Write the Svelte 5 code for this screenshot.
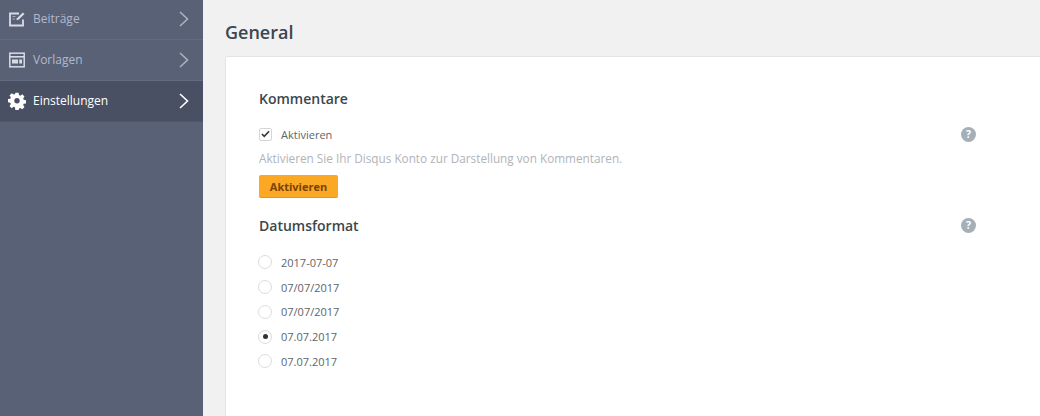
<script lang="ts">
  const nav = [
    { label: 'Beiträge', icon: 'edit', active: false },
    { label: 'Vorlagen', icon: 'layout', active: false },
    { label: 'Einstellungen', icon: 'gear', active: true }
  ]
  const dates = [
    { label: '2017-07-07', checked: false },
    { label: '07/07/2017', checked: false },
    { label: '07/07/2017', checked: false },
    { label: '07.07.2017', checked: true },
    { label: '07.07.2017', checked: false }
  ]
</script>

{#snippet help()}
  <span class="help">?</span>
{/snippet}

<div class="page">
  <aside class="sidebar">
    {#each nav as item}
      <div class="nav-item" class:active={item.active}>
        <svg class="nav-icon" viewBox="0 0 18 18" width="18" height="18" fill="none" stroke="currentColor">
          {#if item.icon === 'edit'}
            <path d="M15 9.5v6H2V3.5h9" stroke-width="1.8" />
            <path d="M8.5 10.2l.4-2 6-5.7 1.6 1.6-6 5.7z" fill="currentColor" stroke="none" />
            <path d="M4.5 6.5h3M4.5 9h2.5" stroke-width="1" opacity="0.6" />
          {:else if item.icon === 'layout'}
            <rect x="1.8" y="2.2" width="14.4" height="13.6" stroke-width="1.5" />
            <path d="M2 5.8h14" stroke-width="1.6" />
            <path d="M4 8.6h6v4H4zM11.2 8.6H14v4h-2.8z" fill="currentColor" stroke="none" />
          {:else}
            <path fill="currentColor" stroke="none" fill-rule="evenodd" d="M7.4.8h3.2l.4 2.3 1.3.55 1.95-1.35 2.25 2.25-1.35 1.95.55 1.3 2.3.4v3.2l-2.3.4-.55 1.3 1.35 1.95-2.25 2.25-1.95-1.35-1.3.55-.4 2.3H7.4L7 15.35l-1.3-.55-1.95 1.35-2.25-2.25L2.85 11.95 2.3 10.65 0 10.25v-3.2l2.3-.4.55-1.3L1.5 3.4l2.25-2.25L5.7 2.5 7 1.95zM9 6.1a2.7 2.7 0 1 0 0 5.4 2.7 2.7 0 0 0 0-5.4z" />
          {/if}
        </svg>
        <span class="nav-label">{item.label}</span>
        <svg class="chevron" viewBox="0 0 10 16" width="10" height="16" fill="none" stroke="currentColor" stroke-width="1.6">
          <path d="M1 1l7.5 7L1 15" />
        </svg>
      </div>
    {/each}
  </aside>

  <main class="content">
    <h1>General</h1>
    <section class="card">
      <div class="title-row">
        <h2>Kommentare</h2>
      </div>
      <div class="check-row">
        <span class="checkbox">
          <svg viewBox="0 0 10 8" width="9" height="8" fill="none" stroke="#2f3438" stroke-width="1.7">
            <path d="M1 4l2.6 2.6L9 1" />
          </svg>
        </span>
        <span class="check-label">Aktivieren</span>
        {@render help()}
      </div>
      <p class="hint">Aktivieren Sie Ihr Disqus Konto zur Darstellung von Kommentaren.</p>
      <button class="action">Aktivieren</button>

      <div class="title-row date-title">
        <h2>Datumsformat</h2>
        {@render help()}
      </div>
      <ul class="radios">
        {#each dates as date}
          <li>
            <span class="radio" class:checked={date.checked}></span>
            {date.label}
          </li>
        {/each}
      </ul>
    </section>
  </main>
</div>

<style>
  :global(body) {
    margin: 0;
    font-family: "Open Sans", "Noto Sans", sans-serif;
  }

  .page {
    display: flex;
    height: 416px;
    overflow: hidden;
    background: #f1f1f1;
  }

  .sidebar {
    width: 203px;
    flex-shrink: 0;
    background: #596176;
    box-sizing: border-box;
    margin-top: -1px;
  }

  .nav-item {
    display: flex;
    align-items: center;
    box-sizing: border-box;
    height: 41px;
    padding: 0 14px 1px 8px;
    border-bottom: 1px solid #636b80;
    color: #b0b9d0;
    font-size: 12px;
  }

  .nav-item.active {
    background: #495064;
    border-bottom-color: #50576b;
    color: #fff;
  }

  .nav-icon {
    flex-shrink: 0;
    margin-right: 7px;
    color: #d8dce5;
  }

  .active .nav-icon {
    color: #fff;
  }

  .nav-label {
    flex: 1;
  }

  .chevron {
    color: #aab1c2;
  }

  .active .chevron {
    color: #fff;
  }

  .content {
    flex: 1;
    padding-left: 22px;
  }

  h1 {
    margin: 0;
    padding: 19px 0 0 0;
    height: 37px;
    font-size: 18px;
    line-height: 27px;
    font-weight: 600;
    color: #3c464c;
  }

  .card {
    box-sizing: border-box;
    height: 400px;
    padding: 32px 64px 0 33px;
    background: #fff;
    border: 1px solid #e4e4e4;
    border-right: none;
    border-radius: 2px 0 0 0;
  }

  .title-row {
    display: flex;
    align-items: center;
    justify-content: space-between;
  }

  h2 {
    margin: 0;
    font-size: 14px;
    line-height: 20px;
    font-weight: 600;
    color: #3c464c;
  }

  .check-row {
    display: flex;
    align-items: center;
    margin-top: 16px;
    height: 18px;
  }

  .checkbox {
    display: flex;
    align-items: center;
    justify-content: center;
    box-sizing: border-box;
    width: 13px;
    height: 13px;
    border: 1px solid #d6d6d6;
    border-radius: 2px;
    margin-right: 9px;
  }

  .check-label {
    flex: 1;
    font-size: 11px;
    color: #5d6569;
  }

  .hint {
    margin: 7px 0 0;
    font-size: 11.75px;
    line-height: 17px;
    color: #b1b4b8;
  }

  .action {
    display: block;
    margin-top: 8px;
    width: 79px;
    height: 23px;
    padding: 0;
    font: 700 11px "Open Sans", "Noto Sans", sans-serif;
    color: #7a4300;
    background: #fba825;
    border: none;
    border-bottom: 1px solid #e8961a;
    border-radius: 2px;
  }

  .date-title {
    margin-top: 18px;
  }

  .help {
    display: flex;
    align-items: center;
    justify-content: center;
    width: 15px;
    height: 15px;
    border-radius: 50%;
    background: #a5afb7;
    color: #fff;
    font-size: 10.5px;
    font-weight: 700;
    line-height: 1;
  }

  .date-title .help {
    margin-top: -1px;
  }

  .radios {
    list-style: none;
    margin: 14px 0 0;
    padding: 0;
  }

  .radios li {
    display: flex;
    align-items: center;
    height: 24.75px;
    font-size: 11px;
    color: #5d6569;
  }

  .radio {
    display: flex;
    align-items: center;
    justify-content: center;
    box-sizing: border-box;
    width: 14px;
    height: 14px;
    margin: 0 9px 0 -1px;
    border: 1px solid #dcdcdc;
    border-radius: 50%;
  }

  .radio.checked::after {
    content: '';
    width: 5px;
    height: 5px;
    border-radius: 50%;
    background: #2f3438;
  }
</style>
